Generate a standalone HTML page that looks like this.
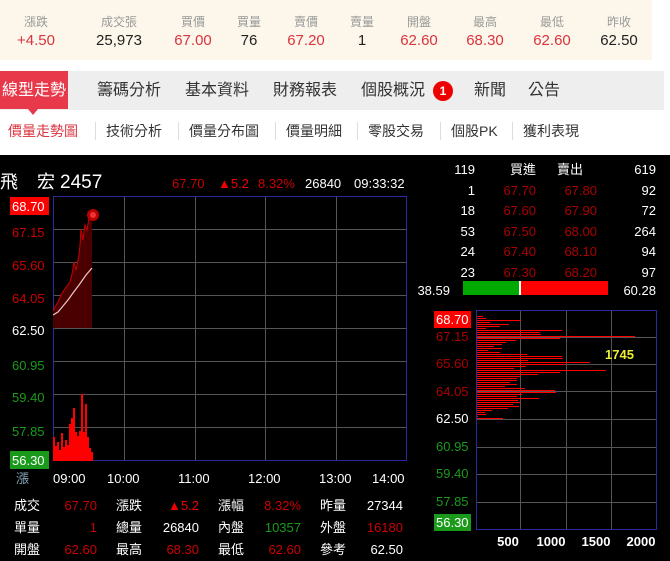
<!DOCTYPE html>
<html><head><meta charset="utf-8"><style>
*{margin:0;padding:0;box-sizing:border-box}
body{width:670px;height:561px;overflow:hidden;background:#fff;font-family:"Liberation Sans","Noto Sans CJK TC",sans-serif;position:relative}
.top{position:absolute;left:0;top:0;width:652px;height:60px;background:#fcf7ea}
.c{position:absolute;text-align:center;width:60px;margin-left:-30px}
.lab{top:13px;font-size:12px;color:#999}
.val{top:32px;font-size:15px;color:#222}
.r{color:#d9343f}
.tabs{position:absolute;left:0;top:71px;width:664px;height:39px;background:#eeeeee}
.tab{position:absolute;top:0;height:39px;line-height:39px;font-size:16px;color:#333}
.act{background:#e8394a;color:#fff;left:0;width:68px;text-align:center;height:38px}
.sub{position:absolute;top:121px;font-size:14px;color:#333}
.sep{position:absolute;top:122px;width:1px;height:18px;background:#ddd}
</style></head><body>
<div class="top">
<div class="c lab" style="left:36px">漲跌</div><div class="c val r" style="left:36px">+4.50</div>
<div class="c lab" style="left:119px">成交張</div><div class="c val" style="left:119px">25,973</div>
<div class="c lab" style="left:193px">買價</div><div class="c val r" style="left:193px">67.00</div>
<div class="c lab" style="left:249px">買量</div><div class="c val" style="left:249px">76</div>
<div class="c lab" style="left:306px">賣價</div><div class="c val r" style="left:306px">67.20</div>
<div class="c lab" style="left:362px">賣量</div><div class="c val" style="left:362px">1</div>
<div class="c lab" style="left:419px">開盤</div><div class="c val r" style="left:419px">62.60</div>
<div class="c lab" style="left:485px">最高</div><div class="c val r" style="left:485px">68.30</div>
<div class="c lab" style="left:552px">最低</div><div class="c val r" style="left:552px">62.60</div>
<div class="c lab" style="left:619px">昨收</div><div class="c val" style="left:619px">62.50</div>
</div>
<div class="tabs">
<div class="tab act">線型走勢</div>
<div class="tab" style="left:97px">籌碼分析</div>
<div class="tab" style="left:185px">基本資料</div>
<div class="tab" style="left:273px">財務報表</div>
<div class="tab" style="left:361px">個股概況</div>
<div style="position:absolute;left:433px;top:10px;width:20px;height:20px;border-radius:10px;background:#e00;color:#fff;font-size:12px;font-weight:bold;text-align:center;line-height:20px">1</div>
<div class="tab" style="left:474px">新聞</div>
<div class="tab" style="left:528px">公告</div>
</div>
<div style="position:absolute;left:28px;top:109px;width:0;height:0;border-left:5px solid transparent;border-right:5px solid transparent;border-top:6px solid #e8394a"></div>
<div class="sub" style="left:8px;color:#d9343f">價量走勢圖</div><div class="sep" style="left:95px"></div>
<div class="sub" style="left:106px">技術分析</div><div class="sep" style="left:178px"></div>
<div class="sub" style="left:189px">價量分布圖</div><div class="sep" style="left:275px"></div>
<div class="sub" style="left:286px">價量明細</div><div class="sep" style="left:357px"></div>
<div class="sub" style="left:368px">零股交易</div><div class="sep" style="left:440px"></div>
<div class="sub" style="left:451px">個股PK</div><div class="sep" style="left:512px"></div>
<div class="sub" style="left:523px">獲利表現</div>
<svg style="position:absolute;left:0;top:155px" width="670" height="406" viewBox="0 155 670 406" font-family="Liberation Sans,Noto Sans CJK TC,sans-serif">
<rect x="0" y="155" width="670" height="406" fill="#000"/>
<g font-size="18" fill="#fff"><text x="0" y="188">飛</text><text x="37" y="188">宏</text><text x="60" y="188" font-size="19">2457</text></g>
<g font-size="13"><text x="172" y="188" fill="#c00">67.70</text><text x="218" y="188" fill="#e00">▲5.2</text><text x="258" y="188" fill="#c00">8.32%</text><text x="305" y="188" fill="#fff">26840</text><text x="354" y="188" fill="#fff">09:33:32</text></g>
<g stroke="#555" stroke-width="1">
<line x1="124.5" y1="196" x2="124.5" y2="461"/><line x1="195.5" y1="196" x2="195.5" y2="461"/><line x1="265.5" y1="196" x2="265.5" y2="461"/><line x1="336.5" y1="196" x2="336.5" y2="461"/>
<line x1="53" y1="229.5" x2="407" y2="229.5"/><line x1="53" y1="262.5" x2="407" y2="262.5"/><line x1="53" y1="295.5" x2="407" y2="295.5"/><line x1="53" y1="328.5" x2="407" y2="328.5"/><line x1="53" y1="361.5" x2="407" y2="361.5"/><line x1="53" y1="394.5" x2="407" y2="394.5"/><line x1="53" y1="427.5" x2="407" y2="427.5"/>
</g>
<rect x="53.5" y="196.5" width="353" height="264" fill="none" stroke="#2a2a9a"/>
<path d="M53 311 L55 307 58 302 61 295 64 290 67 286 70 282 72 274 74 262 76 270 79 255 80 245 81 229 83 240 85 225 87 230 89 218 92 215 L92 328 L53 328Z" fill="#4a0000"/>
<path d="M53 311 L55 307 58 302 61 295 64 290 67 286 70 282 72 274 74 262 76 270 79 255 80 245 81 229 83 240 85 225 87 230 89 218 92 215" fill="none" stroke="#c00" stroke-width="1"/>
<path d="M53 315 L58 312 63 306 68 300 73 293 79 285 86 275 92 268" fill="none" stroke="#f0c8c8" stroke-width="1.2"/>
<circle cx="93" cy="215" r="6" fill="#b00"/><circle cx="93" cy="215" r="3" fill="#e33"/>
<g fill="#f00">
<rect x="53" y="437" width="2" height="24"/><rect x="55" y="446" width="2" height="15"/><rect x="57" y="442" width="2" height="19"/><rect x="59" y="450" width="2" height="11"/><rect x="61" y="433" width="2" height="28"/><rect x="63" y="447" width="2" height="14"/><rect x="65" y="440" width="2" height="21"/><rect x="67" y="445" width="2" height="16"/><rect x="69" y="424" width="2" height="37"/><rect x="71" y="418" width="2" height="43"/><rect x="73" y="408" width="2" height="53"/><rect x="75" y="432" width="2" height="29"/><rect x="77" y="436" width="2" height="25"/><rect x="79" y="431" width="2" height="30"/><rect x="81" y="394" width="2" height="67"/><rect x="83" y="432" width="2" height="29"/><rect x="85" y="404" width="2" height="57"/><rect x="87" y="437" width="2" height="24"/><rect x="89" y="448" width="2" height="13"/><rect x="91" y="452" width="2" height="9"/>
</g>
<g font-size="13">
<rect x="10" y="197" width="39" height="18" fill="#f00"/><text x="12" y="211" fill="#fff">68.70</text>
<text x="12" y="237" fill="#c00">67.15</text><text x="12" y="270" fill="#c00">65.60</text><text x="12" y="303" fill="#c00">64.05</text>
<text x="12" y="335" fill="#fff">62.50</text>
<text x="12" y="370" fill="#1a9a1a">60.95</text><text x="12" y="402" fill="#1a9a1a">59.40</text><text x="12" y="436" fill="#1a9a1a">57.85</text>
<rect x="10" y="451" width="39" height="18" fill="#1a9a1a"/><text x="12" y="465" fill="#fff">56.30</text>
<text x="16" y="483" fill="#8ab">漲</text>
<g fill="#fff"><text x="53" y="483">09:00</text><text x="107" y="483">10:00</text><text x="178" y="483">11:00</text><text x="248" y="483">12:00</text><text x="319" y="483">13:00</text><text x="372" y="483">14:00</text></g>
</g>
<g font-size="13" fill="#fff">
<text x="14" y="510">成交</text><text x="116" y="510">漲跌</text><text x="218" y="510">漲幅</text><text x="320" y="510">昨量</text>
<text x="14" y="532">單量</text><text x="116" y="532">總量</text><text x="218" y="532">內盤</text><text x="320" y="532">外盤</text>
<text x="14" y="554">開盤</text><text x="116" y="554">最高</text><text x="218" y="554">最低</text><text x="320" y="554">參考</text>
</g>
<g font-size="13" text-anchor="end">
<text x="97" y="510" fill="#c00">67.70</text><text x="199" y="510" fill="#e00">▲5.2</text><text x="301" y="510" fill="#c00">8.32%</text><text x="403" y="510" fill="#fff">27344</text>
<text x="97" y="532" fill="#c00">1</text><text x="199" y="532" fill="#fff">26840</text><text x="301" y="532" fill="#1a9a1a">10357</text><text x="403" y="532" fill="#c00">16180</text>
<text x="97" y="554" fill="#c00">62.60</text><text x="199" y="554" fill="#c00">68.30</text><text x="301" y="554" fill="#c00">62.60</text><text x="403" y="554" fill="#fff">62.50</text>
</g>
<g font-size="13" text-anchor="end">
<g fill="#fff"><text x="475" y="174">119</text><text x="475" y="195">1</text><text x="475" y="215">18</text><text x="475" y="236">53</text><text x="475" y="256">24</text><text x="475" y="277">23</text>
<text x="656" y="174">619</text><text x="656" y="195">92</text><text x="656" y="215">72</text><text x="656" y="236">264</text><text x="656" y="256">94</text><text x="656" y="277">97</text>
<text x="536" y="174">買進</text><text x="583" y="174">賣出</text></g>
<g fill="#a00"><text x="536" y="195">67.70</text><text x="536" y="215">67.60</text><text x="536" y="236">67.50</text><text x="536" y="256">67.40</text><text x="536" y="277">67.30</text>
<text x="597" y="195">67.80</text><text x="597" y="215">67.90</text><text x="597" y="236">68.00</text><text x="597" y="256">68.10</text><text x="597" y="277">68.20</text></g>
<text x="450" y="295" fill="#fff">38.59</text><text x="656" y="295" fill="#fff">60.28</text>
</g>
<rect x="463" y="281" width="56" height="14" fill="#0a0"/><rect x="519" y="281" width="2" height="14" fill="#fff"/><rect x="521" y="281" width="87" height="14" fill="#f00"/>
<g stroke="#555"><line x1="520.5" y1="310" x2="520.5" y2="529"/><line x1="566.5" y1="310" x2="566.5" y2="529"/><line x1="611.5" y1="310" x2="611.5" y2="529"/>
<line x1="476" y1="337.5" x2="656" y2="337.5"/><line x1="476" y1="364.5" x2="656" y2="364.5"/><line x1="476" y1="391.5" x2="656" y2="391.5"/><line x1="476" y1="419.5" x2="656" y2="419.5"/><line x1="476" y1="447.5" x2="656" y2="447.5"/><line x1="476" y1="474.5" x2="656" y2="474.5"/><line x1="476" y1="502.5" x2="656" y2="502.5"/></g>
<g stroke="#f00" stroke-width="1">
<path d="M477 316.5H483M477 318.5H486M477 320.5H521M477 322.5H490M477 324.5H509M477 326.5H500M477 328.5H486M477 330.5H562M477 332.5H540M477 334.5H541M477 336.5H635M477 338.5H560M477 340.5H516M477 342.5H506M477 344.5H502M477 346.5H494M477 348.5H502M477 350.5H488M477 352.5H500M477 354.5H527M477 356.5H562M477 358.5H563M477 360.5H528M477 362.5H590M477 364.5H565M477 366.5H526M477 368.5H514M477 370.5H606M477 372.5H560M477 374.5H538M477 376.5H520M477 378.5H517M477 380.5H517M477 382.5H510M477 384.5H517M477 386.5H505M477 388.5H525M477 390.5H555M477 392.5H556M477 394.5H522M477 396.5H517M477 398.5H539M477 400.5H518M477 402.5H520M477 404.5H513M477 406.5H519M477 408.5H508M477 410.5H492M477 412.5H485M477 414.5H486M477 416.5H478M477 418.5H503"/>
</g>
<rect x="476.5" y="310.5" width="180" height="219" fill="none" stroke="#2a2a9a"/>
<text x="605" y="359" font-size="13" font-weight="bold" fill="#ee3">1745</text>
<g font-size="13">
<rect x="434" y="311" width="37" height="17" fill="#f00"/><text x="436" y="324" fill="#fff">68.70</text>
<text x="436" y="341" fill="#a00">67.15</text><text x="436" y="368" fill="#a00">65.60</text><text x="436" y="396" fill="#a00">64.05</text>
<text x="436" y="423" fill="#fff">62.50</text>
<text x="436" y="451" fill="#1a9a1a">60.95</text><text x="436" y="478" fill="#1a9a1a">59.40</text><text x="436" y="506" fill="#1a9a1a">57.85</text>
<rect x="434" y="514" width="37" height="17" fill="#1a9a1a"/><text x="436" y="527" fill="#fff">56.30</text>
<g fill="#fff" font-weight="bold" text-anchor="middle"><text x="508" y="546">500</text><text x="551" y="546">1000</text><text x="596" y="546">1500</text><text x="641" y="546">2000</text></g>
</g>
</svg>
</body></html>
